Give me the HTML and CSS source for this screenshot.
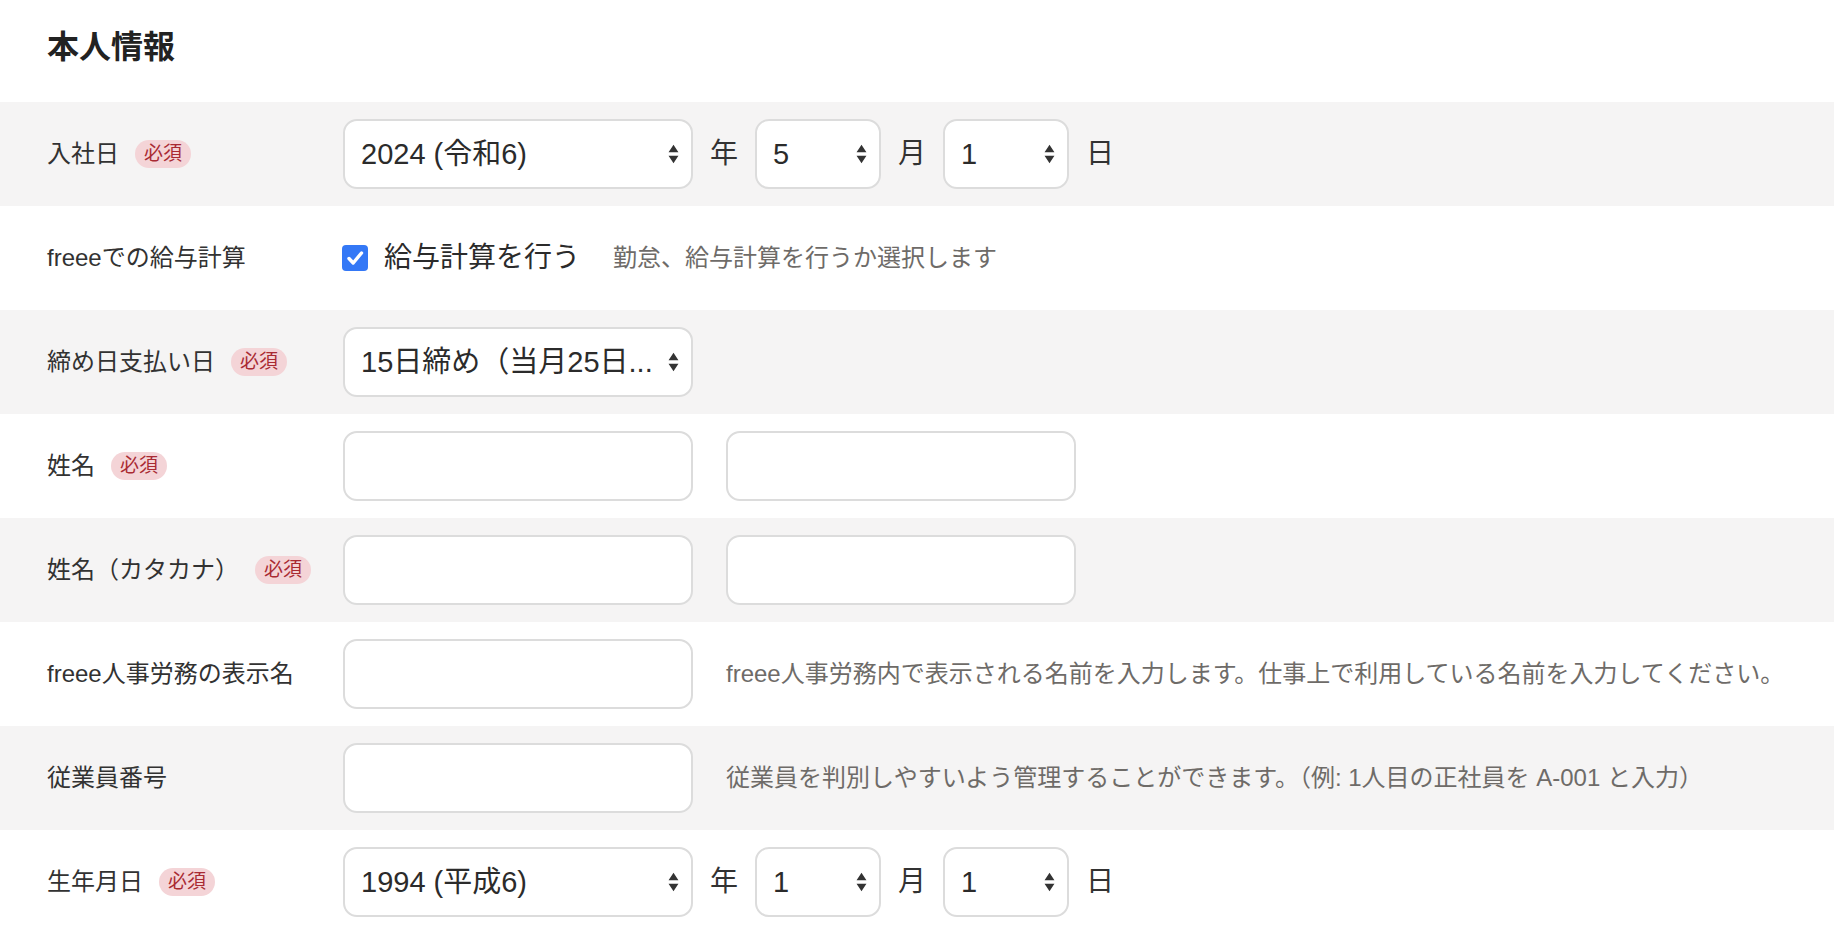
FILE: index.html
```html
<!DOCTYPE html>
<html lang="ja">
<head>
<meta charset="utf-8">
<title>本人情報</title>
<link rel="stylesheet" href="styles.css">
</head>
<body>
<section class="form">
  <h1 class="title">本人情報</h1>

  <div class="row shaded">
    <div class="label">入社日<span class="badge">必須</span></div>
    <div class="controls date">
      <div class="select year"><span class="value">2024 (令和6)</span><svg class="arrows" viewBox="0 0 10 20"><path d="M5 1.5 L9.5 8.5 L0.5 8.5 Z M5 18.5 L9.5 11.5 L0.5 11.5 Z"/></svg></div>
      <span class="unit">年</span>
      <div class="select small"><span class="value">5</span><svg class="arrows" viewBox="0 0 10 20"><path d="M5 1.5 L9.5 8.5 L0.5 8.5 Z M5 18.5 L9.5 11.5 L0.5 11.5 Z"/></svg></div>
      <span class="unit">月</span>
      <div class="select small"><span class="value">1</span><svg class="arrows" viewBox="0 0 10 20"><path d="M5 1.5 L9.5 8.5 L0.5 8.5 Z M5 18.5 L9.5 11.5 L0.5 11.5 Z"/></svg></div>
      <span class="unit">日</span>
    </div>
  </div>

  <div class="row">
    <div class="label">freeeでの給与計算</div>
    <div class="controls">
      <label class="check">
        <span class="box"><svg viewBox="0 0 26 26"><path d="M7 13.5 L11.2 18 L19.5 8" fill="none" stroke="#fff" stroke-width="3.4" stroke-linecap="round" stroke-linejoin="round"/></svg></span>
        <span class="check-text">給与計算を行う</span>
      </label>
      <span class="help help-check">勤怠、給与計算を行うか選択します</span>
    </div>
  </div>

  <div class="row shaded">
    <div class="label">締め日支払い日<span class="badge">必須</span></div>
    <div class="controls">
      <div class="select year"><span class="value">15日締め（当月25日...</span><svg class="arrows" viewBox="0 0 10 20"><path d="M5 1.5 L9.5 8.5 L0.5 8.5 Z M5 18.5 L9.5 11.5 L0.5 11.5 Z"/></svg></div>
    </div>
  </div>

  <div class="row">
    <div class="label">姓名<span class="badge">必須</span></div>
    <div class="controls wide">
      <input class="input" type="text">
      <input class="input" type="text">
    </div>
  </div>

  <div class="row shaded">
    <div class="label">姓名（カタカナ）<span class="badge">必須</span></div>
    <div class="controls wide">
      <input class="input" type="text">
      <input class="input" type="text">
    </div>
  </div>

  <div class="row">
    <div class="label">freee人事労務の表示名</div>
    <div class="controls wide">
      <input class="input" type="text">
      <span class="help">freee人事労務内で表示される名前を入力します。仕事上で利用している名前を入力してください。</span>
    </div>
  </div>

  <div class="row shaded">
    <div class="label">従業員番号</div>
    <div class="controls wide">
      <input class="input" type="text">
      <span class="help">従業員を判別しやすいよう管理することができます。（例: 1人目の正社員を A-001 と入力）</span>
    </div>
  </div>

  <div class="row">
    <div class="label">生年月日<span class="badge">必須</span></div>
    <div class="controls date">
      <div class="select year"><span class="value">1994 (平成6)</span><svg class="arrows" viewBox="0 0 10 20"><path d="M5 1.5 L9.5 8.5 L0.5 8.5 Z M5 18.5 L9.5 11.5 L0.5 11.5 Z"/></svg></div>
      <span class="unit">年</span>
      <div class="select small"><span class="value">1</span><svg class="arrows" viewBox="0 0 10 20"><path d="M5 1.5 L9.5 8.5 L0.5 8.5 Z M5 18.5 L9.5 11.5 L0.5 11.5 Z"/></svg></div>
      <span class="unit">月</span>
      <div class="select small"><span class="value">1</span><svg class="arrows" viewBox="0 0 10 20"><path d="M5 1.5 L9.5 8.5 L0.5 8.5 Z M5 18.5 L9.5 11.5 L0.5 11.5 Z"/></svg></div>
      <span class="unit">日</span>
    </div>
  </div>
</section>
</body>
</html>
```

FILE: styles.css
```css
* {
  box-sizing: border-box;
}

html, body {
  margin: 0;
  padding: 0;
  background: #ffffff;
}

body {
  font-family: "Liberation Sans", "Noto Sans CJK JP", sans-serif;
  color: #323232;
  overflow: hidden;
}

.form {
  width: 100%;
}

.title {
  margin: 0;
  height: 102px;
  padding: 23px 0 0 47px;
  font-size: 32px;
  line-height: 48px;
  font-weight: 700;
  color: #222222;
}

.row {
  display: flex;
  align-items: center;
  height: 104px;
  padding-left: 47px;
  background: #ffffff;
}

.row.shaded {
  background: #f5f4f4;
}

.label {
  width: 296px;
  flex-shrink: 0;
  display: flex;
  align-items: center;
  font-size: 24px;
  line-height: 32px;
  color: #323232;
}

.badge {
  display: inline-block;
  margin-left: 16px;
  height: 28px;
  padding: 0 9px;
  border-radius: 14px;
  background: #f4d4d7;
  color: #a92a33;
  font-size: 19px;
  line-height: 28px;
}

.controls {
  display: flex;
  align-items: center;
}

.controls.wide {
  gap: 33px;
}

.select {
  display: flex;
  align-items: center;
  height: 70px;
  padding: 0 12px 0 16px;
  border: 2px solid #dcdcdc;
  border-radius: 14px;
  background: #ffffff;
  font-size: 29px;
  line-height: 36px;
  color: #2b2b2b;
}

.select.year {
  width: 350px;
}

.select.small {
  width: 126px;
}

.select .value {
  flex: 1;
  min-width: 0;
  white-space: nowrap;
}

.select .arrows {
  width: 11px;
  height: 22px;
  margin-left: 8px;
  flex-shrink: 0;
  fill: #333333;
}

.unit {
  width: 28px;
  margin: 0 17px;
  font-size: 28px;
  line-height: 36px;
  text-align: center;
  color: #323232;
}

.input {
  width: 350px;
  height: 70px;
  margin: 0;
  padding: 0 16px;
  border: 2px solid #dcdcdc;
  border-radius: 14px;
  background: #ffffff;
  font-size: 28px;
  font-family: inherit;
  outline: none;
}

.check {
  display: flex;
  align-items: center;
  margin-left: -1px;
}

.box {
  display: block;
  width: 26px;
  height: 26px;
  border-radius: 4px;
  background: #3478f6;
}

.box svg {
  display: block;
  width: 26px;
  height: 26px;
}

.check-text {
  margin-left: 16px;
  font-size: 28px;
  line-height: 36px;
  color: #2b2b2b;
}

.help {
  font-size: 24px;
  line-height: 32px;
  color: #6e6b68;
  white-space: nowrap;
}

.help-check {
  margin-left: 33px;
}
```
